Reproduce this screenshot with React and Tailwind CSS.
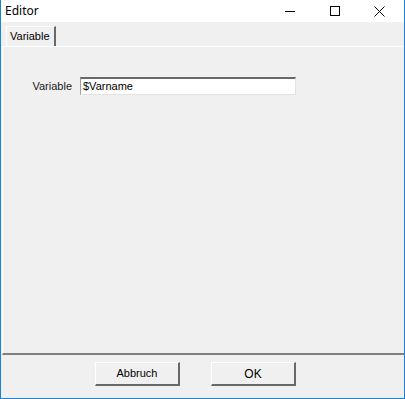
export default function App() {
  const font = { fontFamily: '"Liberation Sans", Arial, sans-serif' };
  return (
    <div className="w-[405px] h-[399px] border border-[#1883d7] border-t-0 bg-[#f0f0f0] flex flex-col overflow-hidden text-black" style={font}>
      {/* title bar */}
      <div className="h-[22px] bg-white flex items-stretch shrink-0 pr-[3px]">
        <div className="flex-1 pl-[4px] flex items-center text-[12px] font-['Noto_Sans',sans-serif]">Editor</div>
        <div className="w-[45px] flex items-center justify-center">
          <svg width="10" height="10" viewBox="0 0 10 10"><path d="M0 5.5h10" stroke="#000" strokeWidth="1" /></svg>
        </div>
        <div className="w-[45px] flex items-center justify-center">
          <svg width="10" height="10" viewBox="0 0 10 10"><rect x="0.5" y="0.5" width="9" height="9" fill="none" stroke="#000" strokeWidth="1" /></svg>
        </div>
        <div className="w-[44px] flex items-center justify-center">
          <svg width="11" height="11" viewBox="0 0 11 11"><path d="M0.5 0.5l10 10M10.5 0.5l-10 10" stroke="#000" strokeWidth="1" /></svg>
        </div>
      </div>

      {/* tab strip */}
      <div className="h-[24px] pl-[5px] pt-[4px] flex items-end shrink-0">
        <div className="h-[20px] w-[50px] border-l border-t border-white border-r-2 border-r-[#696969] flex items-center pl-[3px] text-[11px]">
          Variable
        </div>
      </div>

      {/* tab panel */}
      <div className="flex-1 ml-[1px] border-t border-l border-white border-b-2 border-b-[#808080]">
        <div className="pt-[30px] flex items-center">
          <div className="w-[77px] text-right pr-[8px] text-[11px] text-[#1a1a1a]">Variable</div>
          <div className="w-[216px] h-[18px] bg-white border-t-2 border-l border-t-[#696969] border-l-[#a0a0a0] border-r border-b border-r-[#e3e3e3] border-b-[#e3e3e3] flex items-center pl-[2px] text-[11px]">
            $Varname
          </div>
        </div>
      </div>

      {/* bottom buttons */}
      <div className="h-[43px] shrink-0 flex items-start gap-[31px] pt-[7px] pl-[94px]">
        <div className="w-[85px] h-[24px] bg-[#f0f0f0] border-l border-t border-white border-r-2 border-b-2 border-r-[#696969] border-b-[#696969] flex items-center justify-center text-[11px]">
          Abbruch
        </div>
        <div className="w-[85px] h-[24px] bg-[#f0f0f0] border-l border-t border-white border-r-2 border-b-2 border-r-[#696969] border-b-[#696969] flex items-center justify-center text-[12px]">
          OK
        </div>
      </div>
    </div>
  );
}
